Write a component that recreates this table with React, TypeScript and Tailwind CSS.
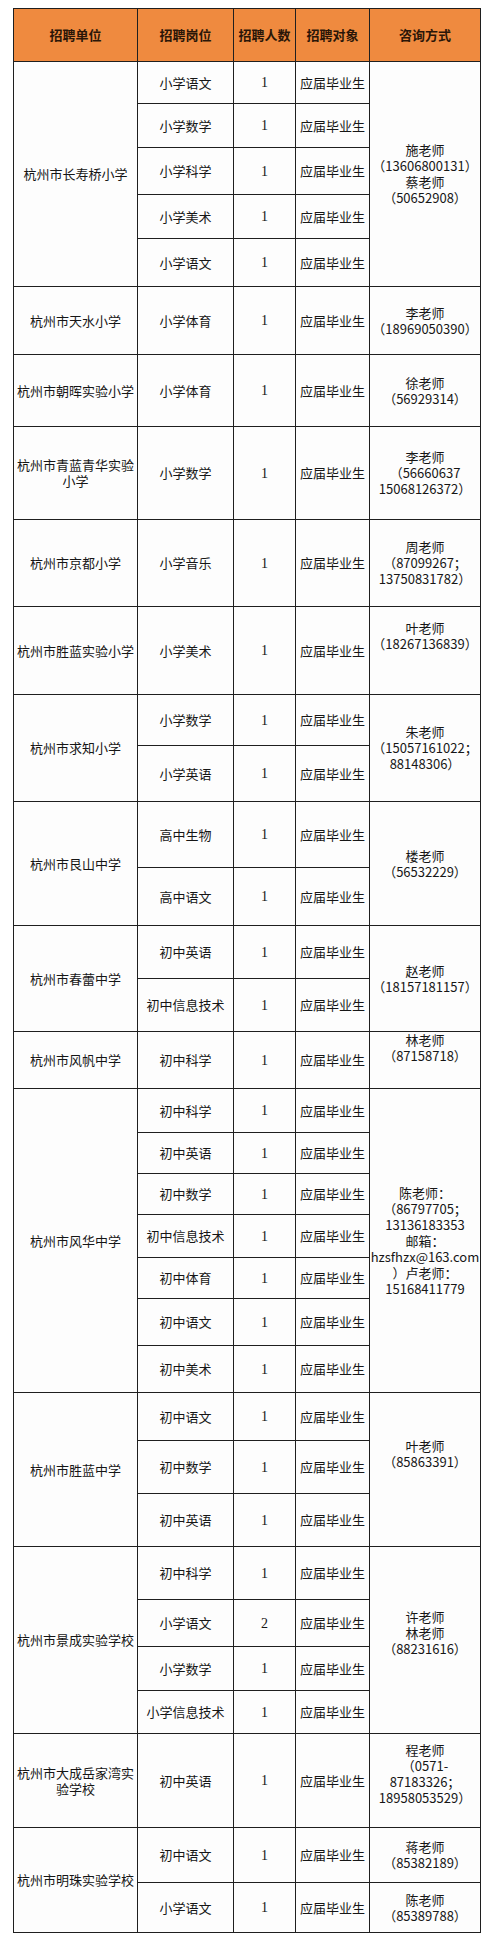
import { Fragment } from "react"
import type { ReactNode } from "react"

type School = {
  name: string
  jobs: [string, string][]
  contact?: string[]
  // per-row contacts (only one school splits them)
  contacts?: string[][]
  lift?: string
}

const schools: School[] = [
  {
    name: "杭州市长寿桥小学",
    jobs: [
      ["小学语文", "1"],
      ["小学数学", "1"],
      ["小学科学", "1"],
      ["小学美术", "1"],
      ["小学语文", "1"],
    ],
    contact: ["施老师", "（13606800131）", "蔡老师", "（50652908）"],
  },
  { name: "杭州市天水小学", jobs: [["小学体育", "1"]], contact: ["李老师", "（18969050390）"] },
  { name: "杭州市朝晖实验小学", jobs: [["小学体育", "1"]], contact: ["徐老师", "（56929314）"] },
  {
    name: "杭州市青蓝青华实验小学",
    jobs: [["小学数学", "1"]],
    contact: ["李老师", "（56660637", "15068126372）"],
  },
  {
    name: "杭州市京都小学",
    jobs: [["小学音乐", "1"]],
    contact: ["周老师", "（87099267；", "13750831782）"],
  },
  {
    name: "杭州市胜蓝实验小学",
    jobs: [["小学美术", "1"]],
    contact: ["叶老师", "（18267136839）"],
    lift: "pb-[30px]",
  },
  {
    name: "杭州市求知小学",
    jobs: [
      ["小学数学", "1"],
      ["小学英语", "1"],
    ],
    contact: ["朱老师", "（15057161022；", "88148306）"],
  },
  {
    name: "杭州市艮山中学",
    jobs: [
      ["高中生物", "1"],
      ["高中语文", "1"],
    ],
    contact: ["楼老师", "（56532229）"],
  },
  {
    name: "杭州市春蕾中学",
    jobs: [
      ["初中英语", "1"],
      ["初中信息技术", "1"],
    ],
    contact: ["赵老师", "（18157181157）"],
  },
  {
    name: "杭州市风帆中学",
    jobs: [["初中科学", "1"]],
    contact: ["林老师", "（87158718）"],
    lift: "pb-[24px]",
  },
  {
    name: "杭州市风华中学",
    jobs: [
      ["初中科学", "1"],
      ["初中英语", "1"],
      ["初中数学", "1"],
      ["初中信息技术", "1"],
      ["初中体育", "1"],
      ["初中语文", "1"],
      ["初中美术", "1"],
    ],
    contact: [
      "陈老师：",
      "（86797705；",
      "13136183353",
      "邮箱：",
      "hzsfhzx@163.com",
      "）卢老师：",
      "15168411779",
    ],
  },
  {
    name: "杭州市胜蓝中学",
    jobs: [
      ["初中语文", "1"],
      ["初中数学", "1"],
      ["初中英语", "1"],
    ],
    contact: ["叶老师", "（85863391）"],
    lift: "pb-[32px]",
  },
  {
    name: "杭州市景成实验学校",
    jobs: [
      ["初中科学", "1"],
      ["小学语文", "2"],
      ["小学数学", "1"],
      ["小学信息技术", "1"],
    ],
    contact: ["许老师", "林老师", "（88231616）"],
    lift: "pb-[14px]",
  },
  {
    name: "杭州市大成岳家湾实验学校",
    jobs: [["初中英语", "1"]],
    contact: ["程老师", "（0571-", "87183326；", "18958053529）"],
    lift: "pb-[14px]",
  },
  {
    name: "杭州市明珠实验学校",
    jobs: [
      ["初中语文", "1"],
      ["小学语文", "1"],
    ],
    contacts: [
      ["蒋老师", "（85382189）"],
      ["陈老师", "（85389788）"],
    ],
  },
]

const spans: Record<number, string> = {
  1: "",
  2: "row-span-2",
  3: "row-span-3",
  4: "row-span-4",
  5: "row-span-5",
  7: "row-span-7",
}

const headers = ["招聘单位", "招聘岗位", "招聘人数", "招聘对象", "咨询方式"]

function Cell({ className = "", children }: { className?: string; children: ReactNode }) {
  return (
    <div className={`flex items-center justify-center bg-[#fdfdfd] text-center ${className}`}>
      {children}
    </div>
  )
}

function Lines({ lines }: { lines: string[] }) {
  return (
    <div className="leading-[16px]">
      {lines.map((l, i) => (
        <div key={i} className="whitespace-nowrap">
          {l}
        </div>
      ))}
    </div>
  )
}

export default function App() {
  return (
    <div className="min-h-screen bg-white pt-[8px] pl-[13px] font-['Noto_Sans_CJK_SC',sans-serif] text-[13px] text-[#161616]">
      <div className="grid w-fit grid-cols-[123px_95px_61px_73px_110px] grid-rows-[52px_41px_43px_46px_43px_47px_67px_71px_92px_86px_87px_50px_55px_65px_57px_52px_52px_56px_43px_40px_40px_42px_40px_46px_46px_47px_52px_52px_52px_46px_43px_42px_93px_54px_49px] gap-px bg-[#1f1f1f] p-px">
        {headers.map((h) => (
          <div
            key={h}
            className="flex items-center justify-center bg-[#ef8a3f] text-[13px] font-bold text-[#2a1608]"
          >
            {h}
          </div>
        ))}

        {schools.map((s) => {
          const span = spans[s.jobs.length]
          return s.jobs.map(([job, count], i) => (
            <Fragment key={s.name + i}>
              {i === 0 && <Cell className={`${span} px-0.5 leading-[16px]`}>{s.name}</Cell>}
              <Cell className="whitespace-nowrap">{job}</Cell>
              <Cell className="font-['Liberation_Serif',serif] text-[14px]">{count}</Cell>
              <Cell>应届毕业生</Cell>
              {s.contacts ? (
                <Cell>
                  <Lines lines={s.contacts[i]} />
                </Cell>
              ) : (
                i === 0 && (
                  <Cell className={`${span} ${s.lift ?? ""}`}>
                    <Lines lines={s.contact ?? []} />
                  </Cell>
                )
              )}
            </Fragment>
          ))
        })}
      </div>
    </div>
  )
}
